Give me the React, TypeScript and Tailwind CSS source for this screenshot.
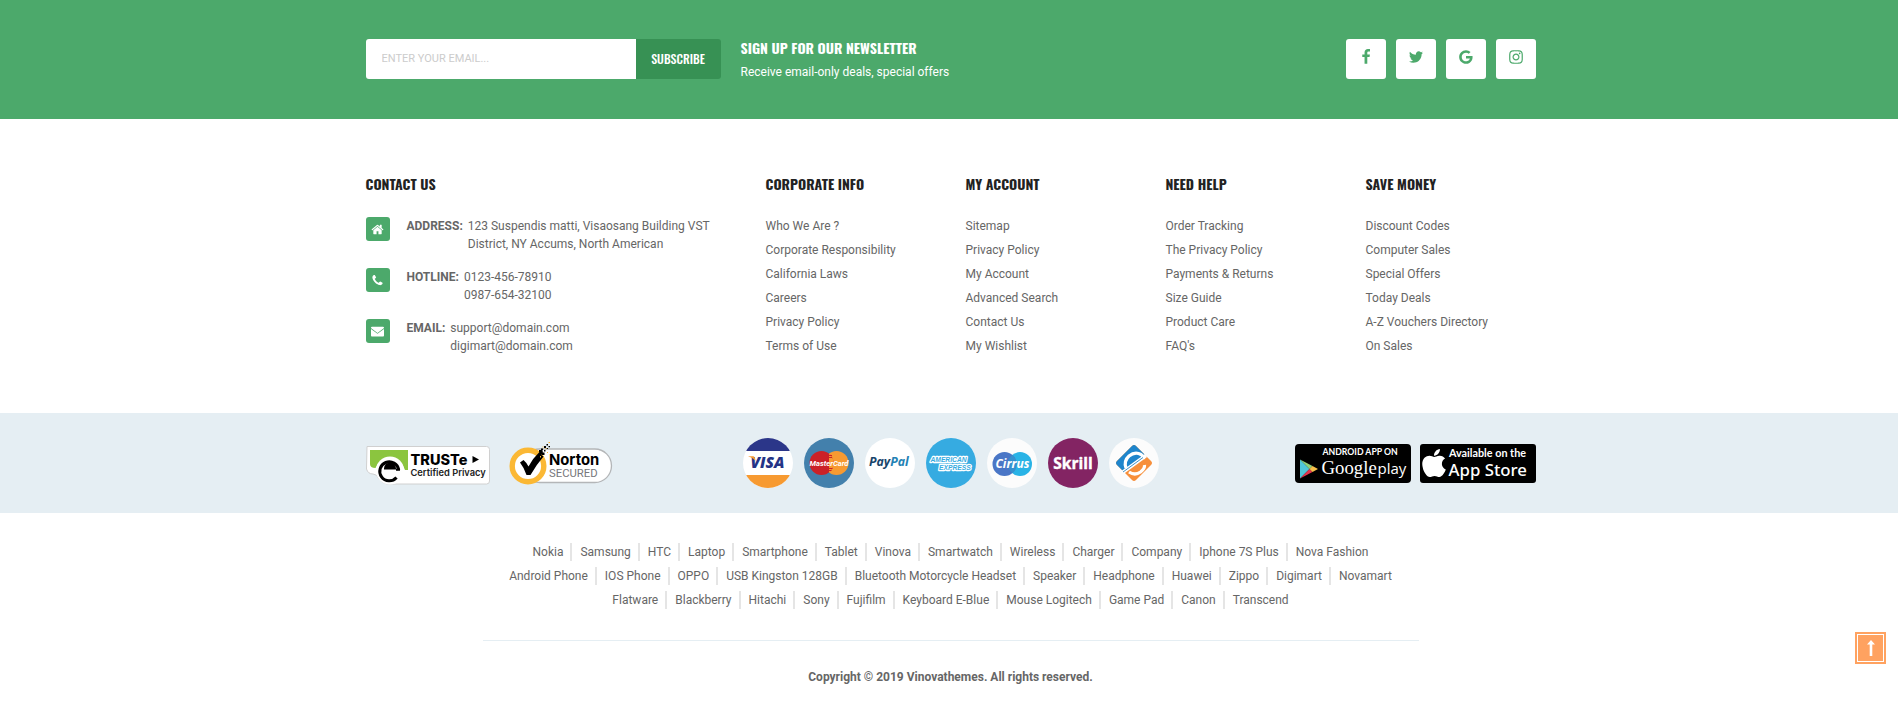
import type { ReactNode } from "react";
import { FaApple } from "react-icons/fa";

const iconPaths = {
  facebook:
    "M1343 12v264h-157q-86 0-116 36t-30 108v189h293l-39 296h-254v759h-306v-759h-255v-296h255v-218q0-186 104-288.5t277-102.5q147 0 228 12z",
  twitter:
    "M1684 408q-67 98-162 167 1 14 1 42 0 130-38 259.5t-115.5 248.5-184.5 210.5-258 146-323 54.5q-271 0-496-145 35 4 78 4 225 0 401-138-105-2-188-64.5t-114-159.5q33 5 61 5 43 0 85-11-112-23-185.5-111.5t-73.5-205.5v-4q68 38 146 41-66-44-105-115t-39-154q0-88 44-163 121 149 294.5 238.5t371.5 99.5q-8-38-8-74 0-134 94.5-228.5t228.5-94.5q140 0 236 102 109-21 205-78-37 115-142 178 93-10 186-50z",
  google:
    "M896 786h725q12 67 12 128 0 217-91 387.5t-259.5 266.5-386.5 96q-157 0-299-60.5t-245-163.5-163.5-245-60.5-299 60.5-299 163.5-245 245-163.5 299-60.5q300 0 515 201l-209 201q-123-119-306-119-129 0-238.5 65t-173.5 176.5-64 243.5 64 243.5 173.5 176.5 238.5 65q87 0 160-24t120-60 82-82 51.5-87 22.5-78h-436v-264z",
  instagram:
    "M1152 896q0-106-75-181t-181-75-181 75-75 181 75 181 181 75 181-75 75-181zm138 0q0 164-115 279t-279 115-279-115-115-279 115-279 279-115 279 115 115 279zm108-410q0 38-27 65t-65 27-65-27-27-65 27-65 65-27 65 27 27 65zm-502-220q-7 0-76.5-.5t-105.5 0-96.5 3-103 10-71.5 18.5q-50 20-88 58t-58 88q-11 29-18.5 71.5t-10 103-3 96.5 0 105.5.5 76.5-.5 76.5 0 105.5 3 96.5 10 103 18.5 71.5q20 50 58 88t88 58q29 11 71.5 18.5t103 10 96.5 3 105.5 0 76.5-.5 76.5.5 105.5 0 96.5-3 103-10 71.5-18.5q50-20 88-58t58-88q11-29 18.5-71.5t10-103 3-96.5 0-105.5-.5-76.5.5-76.5 0-105.5-3-96.5-10-103-18.5-71.5q-20-50-58-88t-88-58q-29-11-71.5-18.5t-103-10-96.5-3-105.5 0-76.5.5zm768 630q0 229-5 317-10 208-124 322t-322 124q-88 5-317 5t-317-5q-208-10-322-124t-124-322q-5-88-5-317t5-317q10-208 124-322t322-124q88-5 317-5t317 5q208 10 322 124t124 322q5 88 5 317z",
  home:
    "M1472 992v480q0 26-19 45t-45 19h-384v-384h-256v384h-384q-26 0-45-19t-19-45v-480q0-1 .5-3t.5-3l575-474 575 474q1 2 1 6zm223-69l-62 74q-8 9-21 11h-3q-13 0-21-7l-692-577-692 577q-12 8-24 7-13-2-21-11l-62-74q-8-10-7-23.5t11-21.5l719-599q32-26 76-26t76 26l244 204v-195q0-14 9-23t23-9h192q14 0 23 9t9 23v408l219 182q10 8 11 21.5t-7 23.5z",
  phone:
    "M1600 1240q0 27-10 70.5t-21 68.5q-21 50-122 106-94 51-186 51-27 0-53-3.5t-57.5-12.5-47-14.5-55.5-20.5-49-18q-98-35-175-83-127-79-264-216t-216-264q-48-77-83-175-3-9-18-49t-20.5-55.5-14.5-47-12.5-57.5-3.5-52.5q0-92 51-186 56-101 106-122 25-11 68.5-21t70.5-10q14 0 21 3 18 6 53 76 11 19 30 54t35 63.5 31 53.5q3 4 17.5 25t21.5 35.5 7 28.5q0 20-28.5 50t-62 55-62 53-28.5 46q0 9 5 22.5t8.5 20.5 14 24 11.5 19q76 137 174 235t235 174q2 1 19 11.5t24 14 20.5 8.5 22.5 5q18 0 46-28.5t53-62 55-62 50-28.5q14 0 28.5 7t35.5 21.5 25 17.5q25 15 53.5 31t63.5 35 54 30q70 35 76 53 3 7 3 21z",
  envelope:
    "M140 256h1512q140 0 140 140v30L896 1100 0 426v-30q0-140 140-140zM0 560l896 660 896-660v900q0 120-120 120H120q-120 0-120-120z",
};

type IconName = keyof typeof iconPaths;

function Icon({ name, className }: { name: IconName; className: string }) {
  return (
    <svg viewBox="0 0 1792 1792" fill="currentColor" aria-hidden="true" className={className}>
      <path d={iconPaths[name]} />
    </svg>
  );
}

const socials: { name: IconName; label: string }[] = [
  { name: "facebook", label: "Facebook" },
  { name: "twitter", label: "Twitter" },
  { name: "google", label: "Google" },
  { name: "instagram", label: "Instagram" },
];

const contacts: { icon: IconName; label: string; lines: string[] }[] = [
  {
    icon: "home",
    label: "ADDRESS:",
    lines: ["123 Suspendis matti, Visaosang Building VST", "District, NY Accums, North American"],
  },
  { icon: "phone", label: "HOTLINE:", lines: ["0123-456-78910", "0987-654-32100"] },
  { icon: "envelope", label: "EMAIL:", lines: ["support@domain.com", "digimart@domain.com"] },
];

const columns = [
  {
    title: "CORPORATE INFO",
    links: ["Who We Are ?", "Corporate Responsibility", "California Laws", "Careers", "Privacy Policy", "Terms of Use"],
  },
  {
    title: "MY ACCOUNT",
    links: ["Sitemap", "Privacy Policy", "My Account", "Advanced Search", "Contact Us", "My Wishlist"],
  },
  {
    title: "NEED HELP",
    links: ["Order Tracking", "The Privacy Policy", "Payments & Returns", "Size Guide", "Product Care", "FAQ's"],
  },
  {
    title: "SAVE MONEY",
    links: ["Discount Codes", "Computer Sales", "Special Offers", "Today Deals", "A-Z Vouchers Directory", "On Sales"],
  },
];

const tagRows = [
  ["Nokia", "Samsung", "HTC", "Laptop", "Smartphone", "Tablet", "Vinova", "Smartwatch", "Wireless", "Charger", "Company", "Iphone 7S Plus", "Nova Fashion"],
  ["Android Phone", "IOS Phone", "OPPO", "USB Kingston 128GB", "Bluetooth Motorcycle Headset", "Speaker", "Headphone", "Huawei", "Zippo", "Digimart", "Novamart"],
  ["Flatware", "Blackberry", "Hitachi", "Sony", "Fujifilm", "Keyboard E-Blue", "Mouse Logitech", "Game Pad", "Canon", "Transcend"],
];

function Container({ children, className }: { children: ReactNode; className: string }) {
  return (
    <div className="pl-[3px]">
      <div className={`mx-auto max-w-[1170px] ${className}`}>{children}</div>
    </div>
  );
}

function Heading({ children }: { children: ReactNode }) {
  return (
    <h3 className="font-['Oswald','Roboto',sans-serif] text-sm leading-5 font-bold text-[#222222]">
      {children}
    </h3>
  );
}

function TrusteBadge() {
  return (
    <svg viewBox="0 0 124 39" role="img" aria-label="TRUSTe Certified Privacy" className="h-[39px] w-[124px]">
      <path d="M1 .5H120.500a3 3 0 0 1 3 3V35a3 3 0 0 1-3 3H21q-5-1-8-5-2-5-6-5-5 0-6.500-5z" fill="#fff" stroke="#d0d0d0" />
      <path d="M4 4H42V24H39A15.500 15.500 0 0 0 9.500 22Q4 22 4 18z" fill="#8bc53f" />
      <circle cx="24" cy="24.500" r="14" fill="#fff" />
      <path d="M30.500 31.500a9.500 9.500 0 1 1 2.200-7.500" fill="none" stroke="#000" strokeWidth="3" />
      <path d="M18 22.500a6 6 0 0 1 12 0v1H18zM30 22.500h4v2.200h-4z" fill="#000" />
      <text x="44.500" y="18.500" fontFamily="Inter, sans-serif" fontWeight="800" fontSize="14.500">TRUSTe</text>
      <path d="M106.500 10l6.500 3.500-6.500 3.500z" />
      <text x="44.500" y="30" fontFamily="Inter, sans-serif" fontWeight="600" fontSize="9.300" fill="#222">Certified Privacy</text>
    </svg>
  );
}

function NortonBadge() {
  return (
    <svg viewBox="0 0 104 44" role="img" aria-label="Norton Secured" className="h-[44px] w-[104px]">
      <rect x="14" y="8" width="88.500" height="33.500" rx="16.700" fill="#fff" stroke="#b4b6b8" strokeWidth="1.300" />
      <circle cx="19" cy="25" r="15.800" fill="#fff" stroke="#fbb834" strokeWidth="5.400" />
      <path d="M11 21.500l3.500-2.500q2.500 2 5 6.500 4-8 10.500-14l2.500-3 1.500 2.500-1.500 3 2 1.500q-7 8-13 18.500h-4q-2.500-7.500-6.500-12.500z" fill="#000" />
      <path d="M32 7.500h2v2h-2zM35 5h2v2h-2zM35 9h1.500v1.500H35zM37.500 3H39v1.500h-1.500zM37.500 7H39v1h-1.500zM39.500 5H41v1.200h-1.500zM33 11.500h2.500V14H33zM30 9h2v2h-2z" fill="#000" />
      <path d="M39.500 1H41v1h-1.500zM36.500 7h1v1h-1zM33.500 5.500h1v1h-1zM38 11h1v1h-1zM31 15h1v1.500h-1z" fill="#fbb834" />
      <text x="40" y="23.500" fontFamily="Inter, sans-serif" fontWeight="700" fontSize="14.800">Norton</text>
      <text x="40" y="36" fontFamily="Roboto, sans-serif" fontSize="11.300" fill="#77787b">SECURED</text>
    </svg>
  );
}

function PaymentIcons() {
  return (
    <ul className="mr-[6px] flex gap-[11px] *:size-[50px]">
      <li>
        <svg viewBox="0 0 50 50" role="img" aria-label="Visa">
          <clipPath id="visa"><circle cx="25" cy="25" r="25" /></clipPath>
          <g clipPath="url(#visa)">
            <path fill="#fff" d="M0 0h50v50H0z" />
            <path fill="#2b3689" d="M0 0h50v13H0z" />
            <path fill="#f79a31" d="M0 37h50v13H0z" />
          </g>
          <text x="7.500" y="30" fontFamily="'Open Sans', sans-serif" fontStyle="italic" fontWeight="800" fontSize="15.500" fill="#243386">VISA</text>
          <path d="M5 18.300h5.500q1.500.5 2 4.500-3-3.500-7.500-4.500z" fill="#f79a31" />
        </svg>
      </li>
      <li>
        <svg viewBox="0 0 50 50" role="img" aria-label="MasterCard">
          <circle cx="25" cy="25" r="25" fill="#4380ac" />
          <circle cx="32.500" cy="25" r="12" fill="#f79a31" />
          <circle cx="17.500" cy="25" r="12" fill="#cb2127" />
          <path d="M25 15.500a12 12 0 0 1 0 19z" fill="#f79a31" />
          <path d="M23 17.500h5M22 19.500h6M21.500 30.500h7M22.500 32.500h5" stroke="#cb2127" />
          <text x="25" y="27.800" textAnchor="middle" fontFamily="Roboto, sans-serif" fontStyle="italic" fontWeight="700" fontSize="7.600" fill="#fff">MasterCard</text>
        </svg>
      </li>
      <li>
        <svg viewBox="0 0 50 50" role="img" aria-label="PayPal">
          <circle cx="25" cy="25" r="25" fill="#fff" />
          <text x="4" y="28" fontFamily="'Open Sans', sans-serif" fontStyle="italic" fontWeight="700" fontSize="12.300" fill="#17456b">
            Pay<tspan fill="#2381b4">Pal</tspan>
          </text>
        </svg>
      </li>
      <li>
        <svg viewBox="0 0 50 50" role="img" aria-label="American Express">
          <circle cx="25" cy="25" r="25" fill="#36abe1" />
          <g fontFamily="'Liberation Sans', sans-serif" fontStyle="italic" fontWeight="700" fontSize="6.700" fill="#36abe1" stroke="#fff" strokeWidth="2.400" paintOrder="stroke" strokeLinejoin="round">
            <text x="4.500" y="23.500">AMERICAN</text>
            <text x="13" y="31.500">EXPRESS</text>
          </g>
        </svg>
      </li>
      <li>
        <svg viewBox="0 0 50 50" role="img" aria-label="Cirrus">
          <circle cx="25" cy="25" r="25" fill="#fcfcfc" />
          <circle cx="33" cy="26" r="12" fill="#29b3e6" />
          <circle cx="17.500" cy="26" r="12" fill="#4a76c6" />
          <path d="M25.300 16.800a12 12 0 0 1 0 18.400 12 12 0 0 1 0-18.400z" fill="#3591cf" />
          <text x="25.500" y="30" textAnchor="middle" fontFamily="'Open Sans', sans-serif" fontStyle="italic" fontWeight="700" fontSize="12" fill="#fff">Cirrus</text>
        </svg>
      </li>
      <li>
        <svg viewBox="0 0 50 50" role="img" aria-label="Skrill">
          <circle cx="25" cy="25" r="25" fill="#832463" />
          <text x="25" y="31" textAnchor="middle" fontFamily="'Open Sans', sans-serif" fontWeight="700" fontSize="15.500" fill="#fff" stroke="#fff" strokeWidth=".4">Skrill</text>
        </svg>
      </li>
      <li>
        <svg viewBox="0 0 50 50" role="img" aria-label="Online payment">
          <circle cx="25" cy="25" r="25" fill="#fcfcfc" />
          <path d="M23 8q2-2 4 0l15 15q2 2 0 4L27 42q-2 2-4 0L8 27q-2-2 0-4z" fill="#f78f3b" />
          <path d="M23 8q2-2 4 0l9 9L14.500 33.500 8 27q-2-2 0-4z" fill="#1e85cc" />
          <path d="M17 30q-2.500-7 3-12 6-5 12-1.500 3 2 2.500 4.500M20 34q6 4 11.500 0 4.500-3.500 4-7" fill="none" stroke="#fff" strokeWidth="3.200" />
          <path d="M13.500 34.500L37 17.500" stroke="#fff" strokeWidth="3.600" />
          <path d="M14 34L34 19.500" stroke="#2b84c0" strokeWidth=".9" />
        </svg>
      </li>
    </ul>
  );
}

function StoreBadges() {
  return (
    <div className="flex gap-[9px]">
      <a href="#google-play" aria-label="Android app on Google Play">
        <svg viewBox="0 0 116 39" className="h-[39px] w-[116px]">
          <rect width="116" height="39" rx="4" fill="#000" />
          <path d="M5 15.500v19l9.500-9.500z" fill="#4fc6d8" />
          <path d="M5 15.500l9.500 9.500 3-3z" fill="#8fd07a" />
          <path d="M5 34.500l9.500-9.500 3 3z" fill="#e2364f" />
          <path d="M17.500 22l5.500 3-5.500 3-3-3z" fill="#f7c04a" />
          <text x="27.500" y="11" fontFamily="Lato, sans-serif" fontWeight="700" fontSize="8.700" fill="#fff">ANDROID APP ON</text>
          <text x="26.500" y="30" fontFamily="'Liberation Serif', serif" fontSize="18.800" fill="#fff">Google</text>
          <text x="82.500" y="30" fontFamily="'Open Sans', sans-serif" fontWeight="400" fontSize="15" fill="#fff">play</text>
        </svg>
      </a>
      <a href="#app-store" aria-label="Available on the App Store">
        <svg viewBox="0 0 116 39" className="h-[39px] w-[116px]">
          <rect width="116" height="39" rx="3" fill="#000" />
          <FaApple x="-2" y="3" size={32} color="#fff" />
          <text x="29" y="13" fontFamily="Lato, sans-serif" fontWeight="700" fontSize="10.800" fill="#fff">Available on the</text>
          <text x="28.500" y="32" fontFamily="'Noto Sans', sans-serif" fontWeight="500" fontSize="16.800" fill="#fff">App Store</text>
        </svg>
      </a>
    </div>
  );
}

export default function App() {
  return (
    <footer className="bg-white font-['Roboto',sans-serif] text-xs text-[#666666]">
      <section className="bg-[#4ca96b] pt-[37px] pb-[38px] text-white">
        <Container className="flex items-center justify-between">
          <div className="flex items-center gap-5">
            <form className="flex h-10 overflow-hidden rounded-[3px]" onSubmit={(e) => e.preventDefault()}>
              <input
                type="email"
                aria-label="Email address"
                placeholder="ENTER YOUR EMAIL..."
                className="w-[270px] bg-white px-4 text-[11px] text-[#666666] outline-none placeholder:text-[#cccccc]"
              />
              <button
                type="submit"
                className="w-[85px] bg-[#379154] font-['Oswald','Roboto',sans-serif] text-xs font-medium"
              >
                SUBSCRIBE
              </button>
            </form>
            <div>
              <h2 className="font-['Oswald','Roboto',sans-serif] text-sm leading-[22px] font-bold">
                SIGN UP FOR OUR NEWSLETTER
              </h2>
              <p className="pt-1 leading-[18px]">Receive email-only deals, special offers</p>
            </div>
          </div>
          <ul className="flex gap-[10px]">
            {socials.map((s) => (
              <li key={s.name}>
                <a
                  href={`#${s.name}`}
                  aria-label={s.label}
                  className="flex size-10 items-center justify-center rounded-[3px] bg-white pb-1 text-[#4ca96b]"
                >
                  <Icon name={s.name} className="size-4" />
                </a>
              </li>
            ))}
          </ul>
        </Container>
      </section>

      <section className="py-[55px]">
        <Container className="flex">
          <div className="w-[400px]">
            <Heading>CONTACT US</Heading>
            <ul className="flex flex-col gap-[15px] pt-[23px]">
              {contacts.map((c) => (
                <li key={c.label} className="flex">
                  <span className="mr-[17px] flex size-6 items-center justify-center rounded-[3px] bg-[#4ca96b] text-white">
                    <Icon name={c.icon} className="size-[13px]" />
                  </span>
                  <strong className="mr-[5px] font-bold leading-[18px]">{c.label}</strong>
                  <span className="leading-[18px]">
                    {c.lines.map((line) => (
                      <span key={line} className="block">{line}</span>
                    ))}
                  </span>
                </li>
              ))}
            </ul>
          </div>
          {columns.map((col) => (
            <nav key={col.title} aria-label={col.title} className="w-[200px] last:w-[170px]">
              <Heading>{col.title}</Heading>
              <ul className="pt-5">
                {col.links.map((link) => (
                  <li key={link} className="leading-6">
                    <a href="#top">{link}</a>
                  </li>
                ))}
              </ul>
            </nav>
          ))}
        </Container>
      </section>

      <section className="bg-[#e5eef3]">
        <Container className="flex h-[100px] items-center justify-between">
          <div className="flex items-end gap-[19px]">
            <TrusteBadge />
            <NortonBadge />
          </div>
          <PaymentIcons />
          <StoreBadges />
        </Container>
      </section>

      <section className="pt-[30px] pb-7">
        <Container className="flex flex-col items-center">
          <div className="flex w-4/5 flex-col gap-[6px] border-b border-[#e5eef3] pb-[31px]">
            {tagRows.map((row) => (
              <ul key={row[0]} className="flex justify-center leading-[18px] whitespace-nowrap">
                {row.map((tag) => (
                  <li key={tag} className="mr-2 border-r-2 border-[#e5e5e5] pr-[7px] last:mr-0 last:border-r-0 last:pr-0">
                    <a href="#top">{tag}</a>
                  </li>
                ))}
              </ul>
            ))}
          </div>
          <p className="pt-[27px] font-bold leading-[18px]">Copyright © 2019 Vinovathemes. All rights reserved.</p>
        </Container>
      </section>

      <button
        type="button"
        aria-label="Back to top"
        className="fixed right-3 bottom-[50px] h-8 w-[31px] bg-[#ffa260] p-[2px]"
      >
        <span className="flex h-full items-center justify-center border border-white">
          <svg viewBox="0 0 8 16" fill="#fff" className="h-4 w-2">
            <path d="M4 0l4 4.500H5.300V16H2.700V4.500H0z" />
          </svg>
        </span>
      </button>
    </footer>
  );
}
